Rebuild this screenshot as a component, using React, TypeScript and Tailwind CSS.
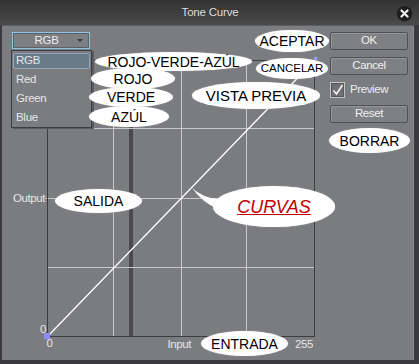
import React from 'react';

// annotation bubbles laid over the dialog
const bubbles = [
  { text: 'ROJO-VERDE-AZÚL', cls: 'left-[95px] top-[52px] w-[157px] h-[19px] text-[14px]' },
  { text: 'ROJO', cls: 'left-[91px] top-[68px] w-[84px] h-[21px] text-[14px]' },
  { text: 'VERDE', cls: 'left-[89px] top-[87px] w-[84px] h-[20px] text-[14px]' },
  { text: 'AZÚL', cls: 'left-[89px] top-[106px] w-[80px] h-[21px] text-[14px]' },
  { text: 'VISTA PREVIA', cls: 'left-[192px] top-[82px] w-[128px] h-[27px] text-[15px]' },
  { text: 'ACEPTAR', cls: 'left-[255px] top-[30px] w-[74px] h-[22px] text-[14px]' },
  { text: 'CANCELAR', cls: 'left-[256px] top-[58px] w-[72px] h-[21px] text-[11.5px]' },
  { text: 'BORRAR', cls: 'left-[329px] top-[128px] w-[81px] h-[25px] text-[14px]' },
  { text: 'SALIDA', cls: 'left-[55px] top-[189px] w-[87px] h-[24px] text-[14px]' },
  { text: 'ENTRADA', cls: 'left-[201px] top-[331px] w-[87px] h-[25px] text-[14px]' },
];

const channels = ['RGB', 'Red', 'Green', 'Blue'];

const Button: React.FC<{ label: string; className?: string }> = ({ label, className = '' }) => (
  <div
    className={`flex h-[18px] items-center justify-center rounded-[2px] border border-[#4f5053] bg-[#7f8084] text-[11.5px] tracking-[-0.4px] text-[#f0f0f0] shadow-[inset_1px_1px_0_#95969a] ${className}`}
  >
    {label}
  </div>
);

const CurveGraph = () => (
  <svg width="305" height="300" className="mt-[6px] block" fontFamily="'Liberation Sans', Arial, sans-serif">
    {/* histogram */}
    <rect x="117" y="5.5" width="4" height="276" fill="#4a4a4d" />
    {/* grid */}
    <g stroke="#c9c9c9" strokeWidth="1">
      <line x1="101.5" y1="5.5" x2="101.5" y2="281.5" />
      <line x1="169.5" y1="5.5" x2="169.5" y2="281.5" />
      <line x1="234.5" y1="5.5" x2="234.5" y2="281.5" />
      <line x1="35.5" y1="73.5" x2="302.5" y2="73.5" />
      <line x1="33" y1="143.5" x2="302.5" y2="143.5" />
      <line x1="35.5" y1="212.5" x2="302.5" y2="212.5" />
    </g>
    <rect x="35.5" y="5.5" width="267" height="276" fill="none" stroke="#3c3d40" />
    {/* curve */}
    <line x1="35.5" y1="281.5" x2="302.5" y2="5.5" stroke="#ffffff" strokeWidth="1.3" />
    <rect x="32" y="278" width="6" height="6" fill="#8c8cff" />
    <rect x="302" y="2" width="3" height="3" fill="#9a9aff" />
    {/* axis labels */}
    <g fill="#e6e6e6" fontSize="11.5" letterSpacing="-0.4">
      <text x="33" y="147" textAnchor="end">Output</text>
      <text x="31" y="278" textAnchor="middle">0</text>
      <text x="37.5" y="292" textAnchor="middle">0</text>
      <text x="179" y="293" textAnchor="end">Input</text>
      <text x="283" y="293">255</text>
    </g>
  </svg>
);

export default function App() {
  return (
    <div className="relative flex h-[364px] w-[419px] flex-col overflow-hidden bg-[#3a3a3c] font-['Liberation_Sans',Arial,sans-serif]">
      {/* title bar */}
      <div className="relative flex h-[25px] items-center justify-center bg-linear-to-b from-[#323232] to-[#4b4b4b] text-[11.5px] tracking-[-0.2px] text-[#dcdcdc]">
        <span className="pl-[1px]">Tone Curve</span>
        <div className="absolute right-[7px] top-[6px] flex h-[15px] w-[15px] items-center justify-center rounded-full bg-[#1c1c1c] shadow-[0_0_0_1px_#3a3a3a]">
          <svg width="9" height="9" viewBox="0 0 9 9">
            <path d="M1.5 1.5 L7.5 7.5 M7.5 1.5 L1.5 7.5" stroke="#f2f2f2" strokeWidth="2.2" strokeLinecap="round" />
          </svg>
        </div>
      </div>

      {/* body */}
      <div className="mb-[4px] ml-[2px] mr-[5px] flex flex-1 border-t border-[#5c5d60] bg-[#7b7c80] shadow-[inset_-1px_0_0_#8a8b8f]">
        <div className="w-[328px] pl-[10px] pt-[6px]">
          <div className="flex h-[17px] w-[78px] items-center border border-[#8fc3e6] bg-[#7e7f83] shadow-[inset_0_0_0_1px_#5f6064]">
            <span className="flex-1 pl-[8px] text-center text-[11.5px] tracking-[-0.3px] text-[#ececec]">RGB</span>
            <svg width="16" height="8" viewBox="0 0 16 8" className="mr-[1px]">
              <path d="M5 2 L11 2 L8 5 Z" fill="#3a3a3c" />
            </svg>
          </div>
          <CurveGraph />
        </div>

        <div className="flex w-[78px] flex-col pt-[6px]">
          <Button label="OK" />
          <Button label="Cancel" className="mt-[7px]" />
          <div className="mt-[7px] flex h-[16px] items-center gap-[5px]">
            <div className="flex h-[16px] w-[15px] items-center justify-center border border-[#c4c4c4] bg-[#6f7074] shadow-[inset_0_0_0_1px_#58595c]">
              <svg width="12" height="12" viewBox="0 0 12 12">
                <path d="M1.5 6.5 L4.5 10 L10.5 1" fill="none" stroke="#f4f4f4" strokeWidth="1.6" />
              </svg>
            </div>
            <span className="text-[11.5px] tracking-[-0.4px] text-[#eeeeee]">Preview</span>
          </div>
          <Button label="Reset" className="mt-[7px]" />
        </div>
      </div>

      {/* open channel list */}
      <div className="absolute left-[11px] top-[50px] flex h-[78px] w-[81px] flex-col border border-[#3d3e41] bg-[#7b7c80] shadow-[2px_1px_0_#5a5b5e]">
        {channels.map((c, i) => (
          <div key={c} className="flex h-[19px] items-center px-[1px]">
            <div
              className={`flex h-[16px] flex-1 items-center rounded-[2px] px-[2px] text-[11.5px] tracking-[-0.3px] text-[#e6e6e6] ${
                i === 0 ? 'border border-[#93a6b8] bg-[#6a7a89]' : 'border border-transparent'
              }`}
            >
              {c}
            </div>
          </div>
        ))}
      </div>

      {/* annotations */}
      {bubbles.map((b) => (
        <div
          key={b.text}
          className={`absolute flex items-center justify-center rounded-[50%] bg-white leading-none text-black shadow-[0_0_1px_#d0d0d0] ${b.cls}`}
        >
          {b.text}
        </div>
      ))}
      <svg width="30" height="30" className="absolute left-[190px] top-[185px]">
        <path d="M2 3 Q13 13 28 14 L28 24 Q13 18 2 3 Z" fill="#ffffff" />
      </svg>
      <div className="absolute left-[213px] top-[186px] flex h-[41px] w-[122px] items-center justify-center rounded-[50%] bg-white text-[18px] italic leading-none text-[#c40000] underline shadow-[0_0_1px_#d0d0d0]">
        CURVAS
      </div>
    </div>
  );
}
